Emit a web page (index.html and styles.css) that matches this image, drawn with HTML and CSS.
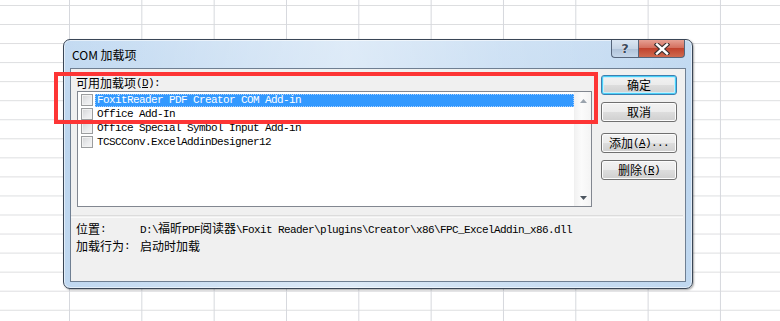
FILE: index.html
```html
<!DOCTYPE html>
<html>
<head>
<meta charset="utf-8">
<link rel="stylesheet" href="styles.css">
</head>
<body>
<div class="desk">
  <div class="win">
    <div class="titlebar">
      <span class="title">COM 加载项</span>
      <div class="caps">
        <div class="cap help"><span>?</span></div>
        <div class="cap close">
          <svg width="16" height="12" viewBox="0 0 16 12">
            <path d="M3 1.5 L13 10.5 M13 1.5 L3 10.5" stroke="#3a3030" stroke-width="4.6" stroke-linecap="square"/>
            <path d="M3 1.5 L13 10.5 M13 1.5 L3 10.5" stroke="#ffffff" stroke-width="2.4" stroke-linecap="square"/>
          </svg>
        </div>
      </div>
    </div>
    <div class="client">
      <div class="top">
        <div class="left">
          <div class="label"><span class="cjk">可用加载项</span><span class="mono">(<u>D</u>):</span></div>
          <div class="listbox">
            <div class="items">
              <div class="item sel"><span class="chk"></span><span class="txt">FoxitReader PDF Creator COM Add-in</span></div>
              <div class="item"><span class="chk"></span><span class="txt">Office Add-In</span></div>
              <div class="item"><span class="chk"></span><span class="txt">Office Special Symbol Input Add-in</span></div>
              <div class="item"><span class="chk"></span><span class="txt">TCSCConv.ExcelAddinDesigner12</span></div>
            </div>
            <div class="sb">
              <svg width="7" height="4" viewBox="0 0 7 4"><path d="M0 4 L3.5 0 L7 4 Z" fill="#9aa3ad"/></svg>
              <svg width="7" height="4" viewBox="0 0 7 4"><path d="M0 0 L3.5 4 L7 0 Z" fill="#4d5660"/></svg>
            </div>
          </div>
        </div>
        <div class="btns">
          <div class="btn def"><span class="cjk">确定</span></div>
          <div class="btn"><span class="cjk">取消</span></div>
          <div class="btn gap"><span class="cjk">添加</span><span class="mono">(<u>A</u>)...</span></div>
          <div class="btn"><span class="cjk">删除</span><span class="mono"> (<u>R</u>)</span></div>
        </div>
      </div>
      <div class="sep"></div>
      <div class="info">
        <div class="k"><span class="cjk">位置</span><span class="mono">:</span></div>
        <div class="v mono">D:\<span class="cjk">福昕</span>PDF<span class="cjk">阅读器</span>\Foxit Reader\plugins\Creator\x86\FPC_ExcelAddin_x86.dll</div>
        <div class="k"><span class="cjk">加载行为</span><span class="mono">:</span></div>
        <div class="v"><span class="cjk">启动时加载</span></div>
      </div>
    </div>
  </div>
</div>
<div class="mark"></div>
</body>
</html>
```
FILE: styles.css
```css
html, body {
  margin: 0;
  padding: 0;
}
body {
  width: 780px;
  height: 321px;
  overflow: hidden;
  position: relative;
  background-color: #ffffff;
  background-image:
    linear-gradient(to right, #d6d8dd 1px, transparent 1px),
    linear-gradient(to bottom, #dcdddf 1px, transparent 1px);
  background-size: 72.33px 100%, 100% 19.06px;
  background-position: 69px 0, 0 5px;
  font-family: "Noto Sans CJK SC", sans-serif;
  color: #000;
}
.desk {
  padding: 39px 0 0 63px;
}
.win {
  width: 630px;
  height: 250px;
  box-sizing: border-box;
  border: 1px solid #3a4656;
  border-radius: 7px;
  background:
    linear-gradient(to right, rgba(255,255,255,0) 0%, rgba(255,255,255,0.45) 45%, rgba(255,255,255,0.2) 70%, rgba(255,255,255,0) 100%),
    linear-gradient(to bottom, #c4dbf2 0%, #bcd5ee 40%, #c0d8f0 100%);
  box-shadow: 1px 1px 2px rgba(0,0,0,0.35), inset 0 0 0 1px rgba(255,255,255,0.55);
  display: flex;
  flex-direction: column;
  padding: 0 6px 6px 6px;
}
.titlebar {
  height: 28px;
  display: flex;
  align-items: flex-start;
  justify-content: space-between;
}
.title {
  font-size: 12px;
  line-height: 14px;
  margin-top: 8px;
  margin-left: 2px;
  color: #000;
}
.caps {
  display: flex;
  margin-right: 1px;
}
.cap {
  height: 18px;
  box-sizing: border-box;
  border: 1px solid #56657a;
  border-top: none;
  display: flex;
  align-items: center;
  justify-content: center;
}
.help {
  width: 27px;
  border-right: none;
  border-radius: 0 0 0 4px;
  background: linear-gradient(to bottom, #dbe6f2 0%, #c6d5e6 50%, #afc2d8 51%, #c5d7ea 100%);
}
.help span {
  font-family: "DejaVu Sans", sans-serif;
  font-weight: bold;
  font-size: 13px;
  line-height: 13px;
  color: #3d4b5c;
  text-shadow: 0 0 1px #fff, 0 0 1px #fff;
}
.close {
  width: 47px;
  border-radius: 0 0 4px 0;
  background: linear-gradient(to bottom, #e6a093 0%, #d4705f 45%, #c1432e 50%, #cf6a4f 100%);
}
.close svg {
  display: block;
}
.client {
  flex: 1;
  background: #f0f0f0;
  border: 1px solid #6f7f92;
  box-sizing: border-box;
  display: flex;
  flex-direction: column;
}
.cjk {
  font-family: "Noto Sans CJK SC", sans-serif;
  font-size: 12px;
  letter-spacing: 0;
}
.mono {
  font-family: "Liberation Mono", monospace;
  font-size: 11px;
  letter-spacing: -0.6px;
}
.top {
  display: flex;
  align-items: flex-start;
  padding: 6px 0 0 6px;
}
.left {
  width: 515px;
}
.label {
  height: 14px;
  line-height: 14px;
  margin-top: 1px;
  margin-left: -1px;
  white-space: nowrap;
  display: flex;
  align-items: center;
}
.listbox {
  margin-top: 1px;
  height: 116px;
  box-sizing: border-box;
  border: 1px solid #828790;
  background: #fff;
  display: flex;
}
.items {
  flex: 1;
  padding-top: 1px;
}
.item {
  height: 14px;
  display: flex;
  align-items: center;
}
.chk {
  width: 12px;
  height: 12px;
  box-sizing: border-box;
  margin-left: 3px;
  margin-right: 2px;
  border: 1px solid #9b9d9f;
  background: linear-gradient(135deg, #d3d4d6 0%, #ebecee 60%, #f4f4f5 100%);
  box-shadow: inset 0 0 0 1px #f2f2f2;
  flex: none;
}
.txt {
  flex: 1;
  height: 13px;
  line-height: 13px;
  padding-left: 2px;
  font-family: "Liberation Mono", monospace;
  font-size: 11px;
  letter-spacing: -0.6px;
  white-space: nowrap;
  box-sizing: border-box;
}
.sel .txt {
  background: #3399ff;
  color: #fff;
  outline: 1px dotted #a8d0ff;
  outline-offset: -1px;
}
.sb {
  width: 17px;
  background: linear-gradient(to right, #f2f2f2, #fbfbfb 40%, #f4f4f4);
  border-left: 1px solid #f0f0f0;
  display: flex;
  flex-direction: column;
  align-items: center;
  justify-content: space-between;
  padding: 7px 0 6px;
  box-sizing: border-box;
}
.sb svg {
  display: block;
}
.btns {
  margin-left: 9px;
  width: 76px;
  display: flex;
  flex-direction: column;
  gap: 7px;
}
.btn {
  height: 20px;
  box-sizing: border-box;
  border: 1px solid #707070;
  border-radius: 3px;
  background: linear-gradient(to bottom, #f2f2f2 0%, #ebebeb 50%, #dddddd 51%, #cfcfcf 100%);
  box-shadow: inset 0 0 0 1px #fcfcfc;
  display: flex;
  align-items: center;
  justify-content: center;
  white-space: nowrap;
  line-height: 14px;
}
.btn.def {
  border-color: #3c7fb1;
  box-shadow: inset 0 0 0 1px #48d0f8, inset 0 0 0 2px #c9eefb;
}
.btn.gap {
  margin-top: 4px;
}
.sep {
  margin-top: 8px;
  height: 1px;
  border-top: 1px solid #dcdcdc;
  border-bottom: 1px solid #fafafa;
  margin-left: 0;
  margin-right: 2px;
}
.info {
  margin-top: 2px;
  padding-left: 5px;
  display: grid;
  grid-template-columns: 64px 1fr;
  grid-auto-rows: 17px;
  align-items: center;
}
.info .k, .info .v {
  white-space: nowrap;
  display: flex;
  align-items: center;
  line-height: 14px;
}
.info .v.mono {
  display: block;
}
.mark {
  position: absolute;
  left: 54px;
  top: 72px;
  width: 544px;
  height: 52px;
  box-sizing: border-box;
  border: 4px solid #fd3535;
}
```
